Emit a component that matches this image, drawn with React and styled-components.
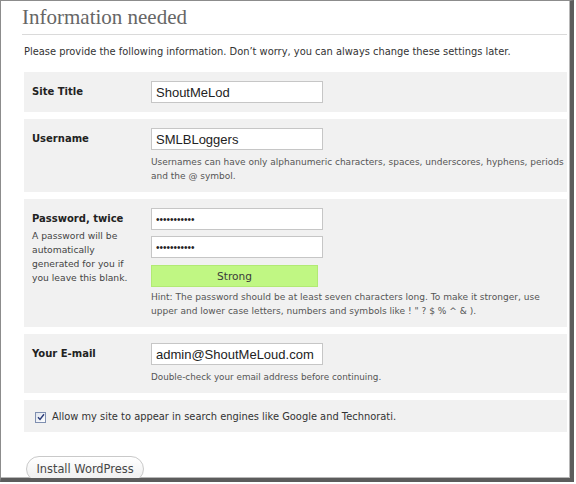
import React from 'react';
import styled, { createGlobalStyle } from 'styled-components';

const GlobalStyle = createGlobalStyle`
  html, body {
    margin: 0;
    padding: 0;
    background: #fff;
  }
  body {
    font-family: "DejaVu Sans", Verdana, sans-serif;
    color: #333;
  }
`;

// Screenshot frame: thin grey on top/left, heavy dark edge right/bottom
const Frame = styled.div`
  box-sizing: border-box;
  width: 574px;
  height: 482px;
  border-left: 1px solid #8c8c8c;
  border-top: 1px solid #8c8c8c;
  border-right: 4px solid #5c5c5c;
  border-bottom: 4px solid #5c5c5c;
  box-shadow: inset -1px -1px 0 #b8b8b8;
  overflow: hidden;
  background: #fff;
`;

const Content = styled.div`
  padding: 4px 3px 0 21px;
`;

const Heading = styled.h1`
  margin: 0;
  font-family: Georgia, "Liberation Serif", serif;
  font-weight: normal;
  font-size: 21px;
  line-height: 24px;
  color: #666;
`;

const Rule = styled.div`
  margin-top: 5px;
  height: 1px;
  background: #dadada;
`;

const Intro = styled.p`
  margin: 10px 0 0 2px;
  font-size: 9.9px;
  line-height: 14px;
  color: #333;
  white-space: nowrap;
`;

const Form = styled.div`
  margin: 13px 0 0 2px;
  display: flex;
  flex-direction: column;
  gap: 7px;
`;

const Row = styled.div`
  display: grid;
  grid-template-columns: 127px 1fr;
  background: #f1f1f1;
`;

const LabelCell = styled.div`
  padding: 13px 0 0 8px;
  line-height: 14px;
`;

const Label = styled.div`
  font-size: 10px;
  font-weight: bold;
  color: #222;
`;

const LabelNote = styled.div`
  margin-top: 3px;
  font-size: 9.2px;
  color: #444;
  white-space: nowrap;
`;

const FieldCell = styled.div`
  padding: 9px 0 9px 0;
  display: flex;
  flex-direction: column;
  align-items: flex-start;
`;

const TextInput = styled.input`
  box-sizing: border-box;
  width: 172px;
  height: 22px;
  margin: 0;
  margin-top: ${({ $gap }) => $gap || 0}px;
  padding: 0 4px;
  border: 1px solid #c6c6c6;
  background: #fff;
  font-family: "Liberation Sans", Arial, sans-serif;
  font-size: ${({ type }) => (type === 'password' ? '10px' : '13px')};
  color: #222;
  outline: none;
`;

const Strength = styled.div`
  box-sizing: border-box;
  width: 167px;
  height: 22px;
  margin-top: 7px;
  background: #c0f783;
  border: 1px solid #b2ea74;
  display: flex;
  align-items: center;
  justify-content: center;
  font-size: 10.6px;
  color: #3a3a3a;
`;

const Note = styled.p`
  margin: ${({ $top }) => $top || 5}px 0 0;
  font-size: ${({ $size }) => $size || 9.2}px;
  line-height: 14px;
  color: #555;
  white-space: nowrap;
`;

const CheckRow = styled.div`
  background: #f1f1f1;
  display: flex;
  align-items: center;
  gap: 6px;
  padding: 10px 0 8px 11px;
  font-size: 9.9px;
  line-height: 14px;
  color: #333;
`;

const Box = styled.span`
  box-sizing: border-box;
  width: 11px;
  height: 11px;
  border: 1px solid #7f8fb0;
  background: linear-gradient(135deg, #dfe4ee, #fff);
  display: inline-flex;
  align-items: center;
  justify-content: center;
`;

const Button = styled.button`
  margin: 24px 0 0 4px;
  width: 118px;
  height: 26px;
  padding: 0;
  border: 1px solid #c9c9c9;
  border-radius: 13px;
  background: linear-gradient(#fff, #eee);
  font-family: "DejaVu Sans", Verdana, sans-serif;
  font-size: 11.4px;
  color: #464646;
`;

export default function App() {
  return (
    <>
      <GlobalStyle />
      <Frame>
        <Content>
          <Heading>Information needed</Heading>
          <Rule />
          <Intro>
            Please provide the following information. Don’t worry, you can always change these settings later.
          </Intro>
          <Form>
            <Row>
              <LabelCell>
                <Label>Site Title</Label>
              </LabelCell>
              <FieldCell>
                <TextInput type="text" defaultValue="ShoutMeLod" />
              </FieldCell>
            </Row>
            <Row>
              <LabelCell>
                <Label>Username</Label>
              </LabelCell>
              <FieldCell>
                <TextInput type="text" defaultValue="SMLBLoggers" />
                <Note $size={9.0}>
                  Usernames can have only alphanumeric characters, spaces, underscores, hyphens, periods
                  <br />
                  and the @ symbol.
                </Note>
              </FieldCell>
            </Row>
            <Row>
              <LabelCell>
                <Label>Password, twice</Label>
                <LabelNote>
                  A password will be
                  <br />
                  automatically
                  <br />
                  generated for you if
                  <br />
                  you leave this blank.
                </LabelNote>
              </LabelCell>
              <FieldCell>
                <TextInput type="password" defaultValue="12345678901" />
                <TextInput type="password" defaultValue="12345678901" $gap={6} />
                <Strength>Strong</Strength>
                <Note $top={3} $size={9.05}>
                  Hint: The password should be at least seven characters long. To make it stronger, use
                  <br />
                  upper and lower case letters, numbers and symbols like ! " ? $ % ^ &amp; ).
                </Note>
              </FieldCell>
            </Row>
            <Row>
              <LabelCell>
                <Label>Your E-mail</Label>
              </LabelCell>
              <FieldCell>
                <TextInput type="text" defaultValue="admin@ShoutMeLoud.com" />
                <Note $size={8.8}>Double-check your email address before continuing.</Note>
              </FieldCell>
            </Row>
            <CheckRow>
              <Box>
                <svg width="8" height="8" viewBox="0 0 8 8">
                  <path d="M1 4.2 L3 6.4 L7 1.2" fill="none" stroke="#2a3b78" strokeWidth="1.4" />
                </svg>
              </Box>
              Allow my site to appear in search engines like Google and Technorati.
            </CheckRow>
          </Form>
          <Button type="button">Install WordPress</Button>
        </Content>
      </Frame>
    </>
  );
}
